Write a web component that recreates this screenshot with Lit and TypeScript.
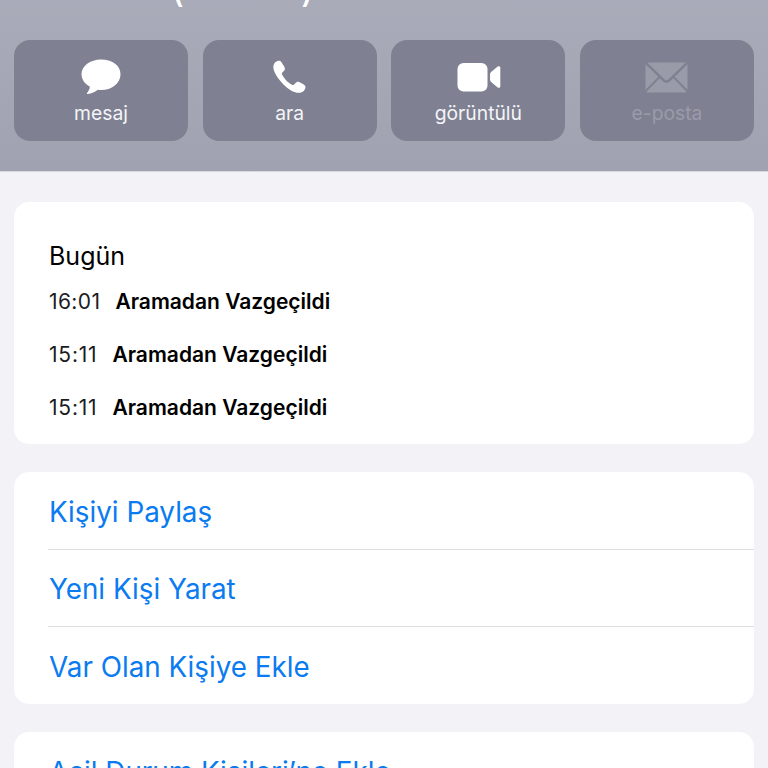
import { LitElement, html, css, svg } from "lit";
import { customElement } from "lit/decorators.js";

const icons = {
  msg: svg`<svg width="40" height="37" viewBox="0 0 40 37"><path fill="#fff" d="M20 .5C9.200.5.500 6.900.500 15.200c0 5.400 3.500 9.800 8.300 12.300.2 2.100-1.300 4.700-2.700 6.400-.5.600-.2 1.300.6 1.200 3.700-.4 7.600-2.100 10.100-4.300 1 .2 2.100.3 3.200.3 10.800 0 19.500-6.900 19.500-15.900S30.800.5 20 .5z"/></svg>`,
  phone: svg`<svg class="ph" width="34" height="34" viewBox="0 0 34 34"><path fill="#fff" d="M3 2.600C4.800.9 7.100.3 8.300 1.100c1 .7 3.700 5 4.300 6.300.6 1.300.3 2.500-.6 3.400l-1.700 1.700c-.6.600-.6 1.300-.3 2 1.100 2.100 2.600 4.200 4.200 5.900 1.700 1.700 3.800 3.200 5.900 4.300.7.300 1.400.3 2-.3l1.700-1.700c.9-.9 2.100-1.200 3.400-.6 1.300.6 4.500 2.500 5.700 3.500 1.100 1 .6 3.600-1 5.200-1.500 1.500-3.500 2.200-5.800 2-4.300-.4-9.700-3.500-14.100-7.900C7.600 20.500 3 14.300 1.700 9.700 1 7 1.300 4.300 3 2.600z"/></svg>`,
  video: svg`<svg class="vd" width="44" height="30" viewBox="0 0 44 30"><rect x="0.500" y="1" width="30" height="28.500" rx="6" fill="#fff"/><path fill="#fff" d="M33 12.500c0-1 .4-1.800 1.100-2.400l6.600-5.500c1.100-.9 2.600-.1 2.600 1.200v18.400c0 1.300-1.500 2.100-2.600 1.200l-6.600-5.500c-.7-.6-1.100-1.400-1.100-2.400z"/></svg>`,
  mail: svg`<svg width="43" height="31" viewBox="0 0 43 31"><path fill="#9a9ba9" d="M2.300.5h38.400L23.600 17.300c-1.200 1.200-3 1.200-4.200 0zM.5 2.200l12.800 12.600L.5 27.700zm42 0v25.500L29.700 14.800zM1.900 29.300l12.800-13 3.300 3.200c2 1.900 5 1.900 7 0l3.300-3.200 12.800 13 .1 1.200H1.800z"/></svg>`,
};

@customElement("app-root")
export class AppRoot extends LitElement {
  static styles = css`
    :host { display: block; width: 768px; height: 768px; overflow: hidden; background: #f2f2f7; font-family: Inter, "Liberation Sans", sans-serif; }
    .head { height: 172px; box-sizing: border-box; background: linear-gradient(#a9abb9, #a1a2b1); border-bottom: 1px solid #d8d8df; }
    .title { height: 40px; overflow: hidden; display: flex; align-items: flex-end; }
    .parens { margin: 0 0 37px 172px; width: 141px; display: flex; justify-content: space-between; color: #fff; font-size: 32px; font-weight: 500; line-height: 22px; height: 22px; }
    .actions { display: grid; grid-template-columns: repeat(4, 174px); column-gap: 14.67px; padding: 0 14px; }
    .action { height: 101px; border-radius: 16px; background: #7f8192; display: flex; flex-direction: column; align-items: center; color: #f4f4f7; font-size: 19.300px; line-height: 22px; }
    .action.off { color: #9a9ba9; }
    .ico { height: 52px; display: flex; align-items: center; justify-content: center; margin-top: 11px; }
    .ph { margin-right: 1px; }
    .vd { margin-left: 2px; }
    .label { margin-top: -1px; }
    .cards { display: flex; flex-direction: column; gap: 28px; padding: 30px 14px 0; }
    .card { background: #fff; border-radius: 15px; }
    .calls { height: 242px; box-sizing: border-box; padding: 38px 35px 0; color: #000; }
    .day { font-size: 25px; line-height: 32px; margin-bottom: 15px; }
    .call { display: flex; height: 53px; font-size: 21px; line-height: 30px; }
    .time { color: #1c1c1e; margin-right: 15px; letter-spacing: 0.4px; }
    .time.wide { letter-spacing: 0.8px; }
    .what { font-weight: 600; }
    .row { height: 77px; margin-left: 34px; padding: 2px 0 0 1px; display: flex; align-items: center; color: #0a7bf0; font-size: 27.800px; border-bottom: 1px solid #dcdce1; box-sizing: border-box; }
    .row:first-child { height: 78px; }
    .row:last-child { border-bottom: 0; }
    .last { height: 80px; }
  `;

  render() {
    const acts = [
      ["mesaj", icons.msg, ""],
      ["ara", icons.phone, ""],
      ["görüntülü", icons.video, ""],
      ["e-posta", icons.mail, "off"],
    ] as const;
    const calls = [["16:01", "Aramadan Vazgeçildi", ""], ["15:11", "Aramadan Vazgeçildi", "wide"], ["15:11", "Aramadan Vazgeçildi", "wide"]];
    return html`
      <div class="head">
        <div class="title"><div class="parens"><span>(</span><span>)</span></div></div>
        <div class="actions">
          ${acts.map(([l, i, c]) => html`<div class="action ${c}"><div class="ico">${i}</div><div class="label">${l}</div></div>`)}
        </div>
      </div>
      <div class="cards">
        <div class="card calls">
          <div class="day">Bugün</div>
          ${calls.map(([t, w, c]) => html`<div class="call"><span class="time ${c}">${t}</span><span class="what">${w}</span></div>`)}
        </div>
        <div class="card">
          <div class="row">Kişiyi Paylaş</div>
          <div class="row">Yeni Kişi Yarat</div>
          <div class="row">Var Olan Kişiye Ekle</div>
        </div>
        <div class="card last">
          <div class="row">Acil Durum Kişileri’ne Ekle</div>
        </div>
      </div>
    `;
  }
}
